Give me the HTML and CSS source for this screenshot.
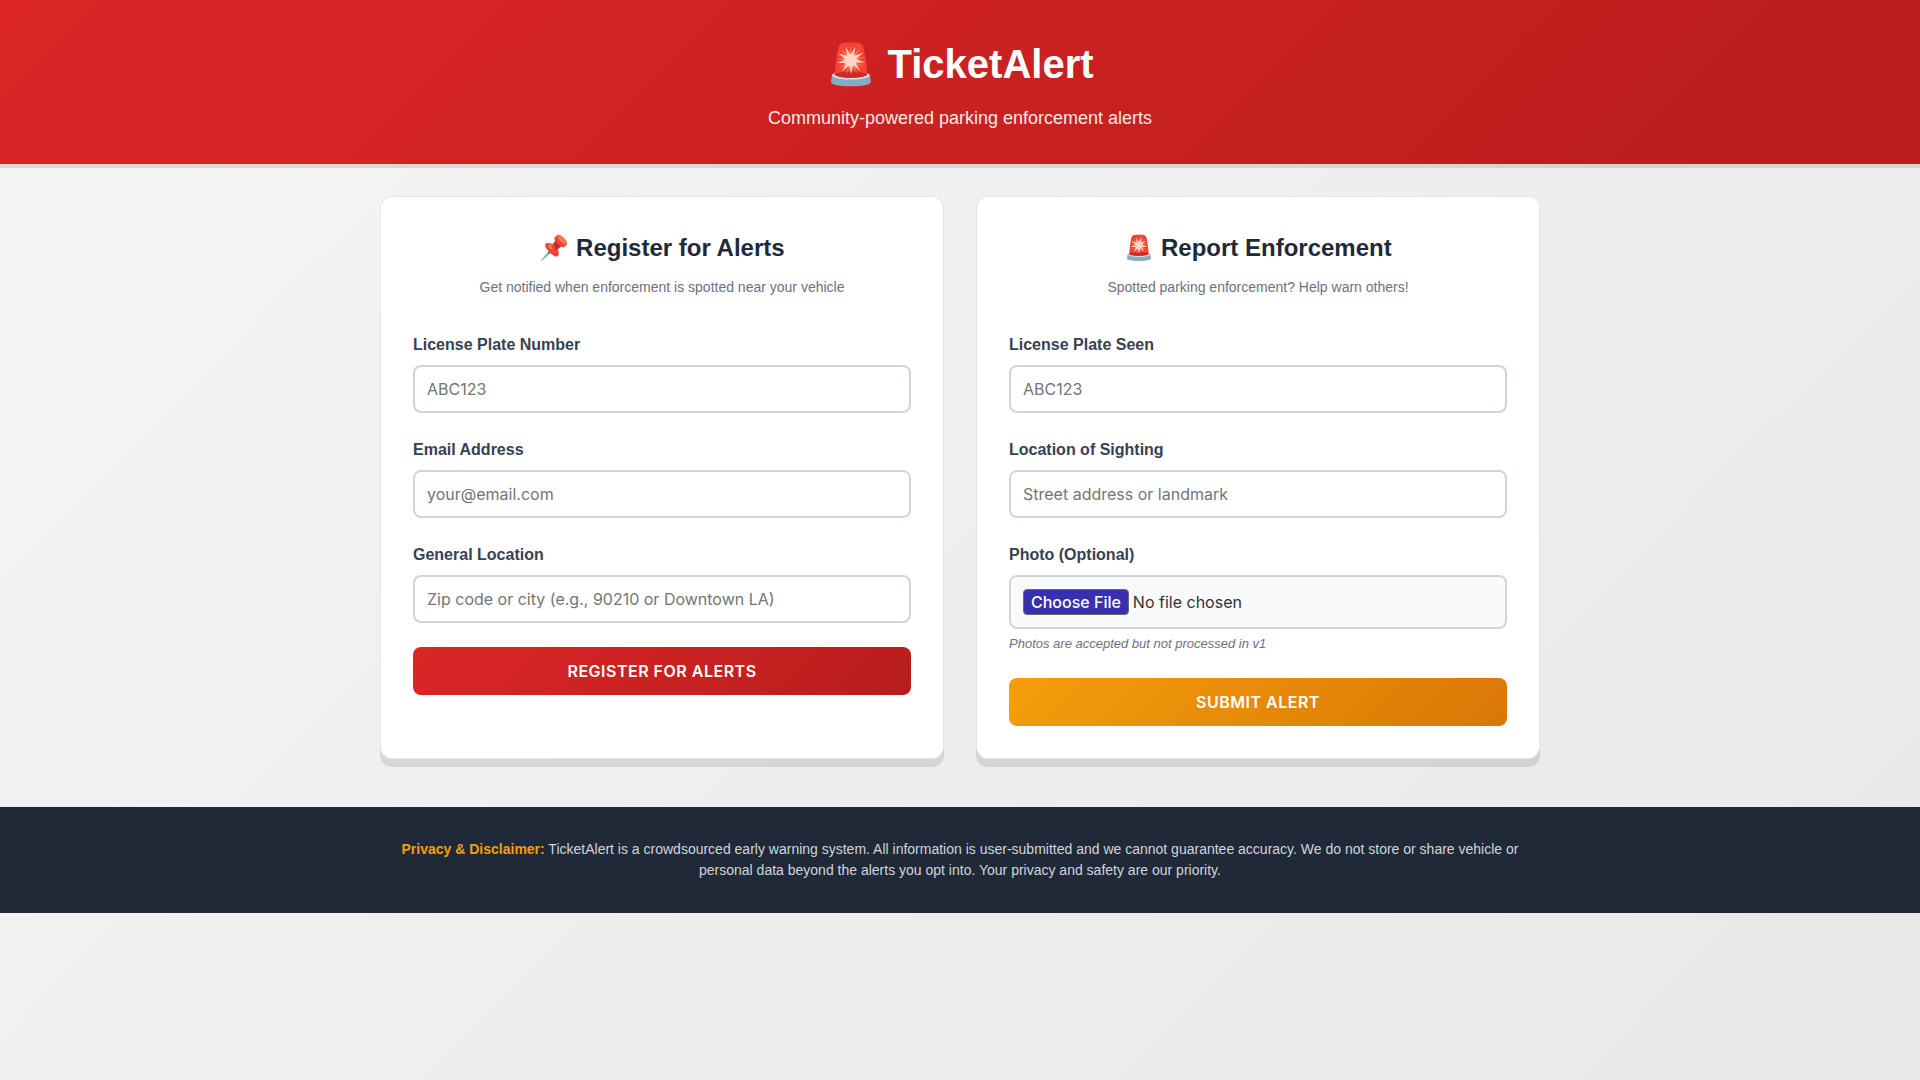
FILE: index.html
```html
<!DOCTYPE html>
<html lang="en">
<head>
    <meta charset="UTF-8">
    <meta name="viewport" content="width=device-width, initial-scale=1.0">
    <title>TicketAlert</title>
    <link rel="stylesheet" href="styles.css">
</head>
<body>
    <header class="header">
        <h1>🚨 TicketAlert</h1>
        <p>Community-powered parking enforcement alerts</p>
    </header>

    <main class="container">
        <section class="card">
            <h2>📌 Register for Alerts</h2>
            <p class="card-subtitle">Get notified when enforcement is spotted near your vehicle</p>
            <form id="registerForm">
                <div class="form-group">
                    <label for="plate">License Plate Number</label>
                    <input type="text" id="plate" name="plate" placeholder="ABC123" required>
                </div>
                <div class="form-group">
                    <label for="email">Email Address</label>
                    <input type="email" id="email" name="email" placeholder="your@email.com" required>
                </div>
                <div class="form-group">
                    <label for="location">General Location</label>
                    <input type="text" id="location" name="location" placeholder="Zip code or city (e.g., 90210 or Downtown LA)" required>
                </div>
                <button type="submit" class="btn btn-primary">Register for Alerts</button>
            </form>
        </section>

        <section class="card">
            <h2>🚨 Report Enforcement</h2>
            <p class="card-subtitle">Spotted parking enforcement? Help warn others!</p>
            <form id="reportForm">
                <div class="form-group">
                    <label for="plateSeen">License Plate Seen</label>
                    <input type="text" id="plateSeen" name="plateSeen" placeholder="ABC123" required>
                </div>
                <div class="form-group">
                    <label for="sighting">Location of Sighting</label>
                    <input type="text" id="sighting" name="sighting" placeholder="Street address or landmark" required>
                </div>
                <div class="form-group">
                    <label for="photo">Photo (Optional)</label>
                    <input type="file" id="photo" name="photo" accept="image/*">
                    <small>Photos are accepted but not processed in v1</small>
                </div>
                <button type="submit" class="btn btn-warning">Submit Alert</button>
            </form>
        </section>
    </main>

    <footer class="footer">
        <p><strong>Privacy &amp; Disclaimer:</strong> TicketAlert is a crowdsourced early warning system. All information is user-submitted and we cannot guarantee accuracy. We do not store or share vehicle or personal data beyond the alerts you opt into. Your privacy and safety are our priority.</p>
    </footer>
</body>
</html>
```
FILE: styles.css
```css
* {
    margin: 0;
    padding: 0;
    box-sizing: border-box;
}

body {
    font-family: "Liberation Sans", Arial, sans-serif;
    font-size: 16px;
    line-height: 25px;
    color: #333;
    background: linear-gradient(135deg, #f5f5f5 0%, #e8e8e8 100%);
    min-height: 100vh;
}

/* Header */
.header {
    background: linear-gradient(135deg, #dc2626 0%, #b91c1c 100%);
    color: white;
    text-align: center;
    padding: 32px 20px;
    box-shadow: 0 4px 0 rgba(0, 0, 0, 0.1);
}

.header h1 {
    font-size: 40px;
    line-height: 64px;
    margin-bottom: 8px;
}

.header p {
    font-size: 18px;
    line-height: 28px;
    opacity: 0.9;
}

/* Cards */
.container {
    max-width: 1200px;
    margin: 32px auto 48px;
    padding: 0 20px;
    display: grid;
    grid-template-columns: 1fr 1fr;
    gap: 32px;
}

.card {
    background: white;
    border: 1px solid #e5e7eb;
    border-radius: 12px;
    padding: 32px;
    box-shadow: 0 8px 0 rgba(0, 0, 0, 0.1);
}

.card h2 {
    font-size: 24px;
    line-height: 38px;
    color: #1f2937;
    text-align: center;
    margin-bottom: 8px;
}

.card-subtitle {
    font-size: 14px;
    line-height: 25px;
    color: #6b7280;
    text-align: center;
    margin-bottom: 32px;
}

/* Forms */
.form-group {
    margin-bottom: 24px;
}

.form-group label {
    display: block;
    font-weight: 600;
    color: #374151;
    margin-bottom: 8px;
}

.form-group input {
    display: block;
    width: 100%;
    padding: 12px;
    border: 2px solid #d1d5db;
    border-radius: 8px;
    font-family: Inter, sans-serif;
    font-size: 16px;
    line-height: 20px;
    background: white;
}

.form-group input[type="file"] {
    background: #f9fafb;
}

.form-group input::file-selector-button {
    font: inherit;
    font-weight: 500;
    line-height: 20px;
    color: white;
    background: #3730b0;
    border: 1px solid #6b6b6b;
    border-radius: 4px;
    padding: 2px 7px;
}

.form-group input:focus {
    outline: none;
    border-color: #dc2626;
}

.form-group small {
    display: block;
    font-size: 13px;
    line-height: 21px;
    font-style: italic;
    color: #6b7280;
    margin-top: 4px;
}

.btn {
    display: block;
    width: 100%;
    padding: 14px;
    border: none;
    border-radius: 8px;
    font-family: Inter, sans-serif;
    font-size: 16px;
    line-height: 20px;
    font-weight: 600;
    letter-spacing: 0.5px;
    text-transform: uppercase;
    color: white;
    cursor: pointer;
}

.btn-primary {
    background: linear-gradient(135deg, #dc2626 0%, #b91c1c 100%);
}

.btn-warning {
    background: linear-gradient(135deg, #f59e0b 0%, #d97706 100%);
}

/* Footer */
.footer {
    background: #1f2937;
    color: #d1d5db;
    text-align: center;
    padding: 32px 20px;
}

.footer p {
    max-width: 1160px;
    margin: 0 auto;
    font-size: 14px;
    line-height: 21px;
}

.footer strong {
    color: #f59e0b;
}

@media (max-width: 768px) {
    .container {
        grid-template-columns: 1fr;
    }
}
```
